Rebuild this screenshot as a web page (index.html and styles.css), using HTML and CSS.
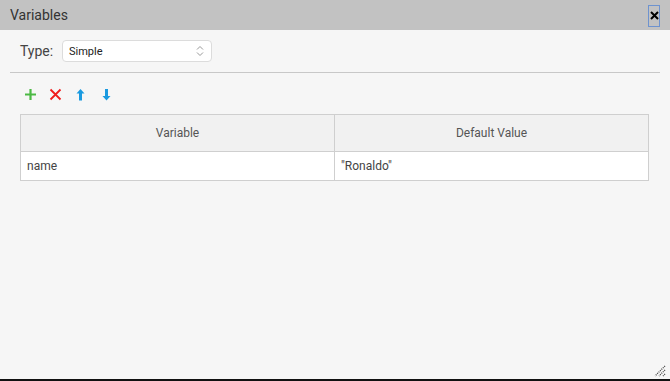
FILE: index.html
```html
<!DOCTYPE html>
<html lang="en">
<head>
  <meta charset="UTF-8">
  <title>Variables</title>
  <link rel="stylesheet" href="styles.css">
</head>
<body>
  <div class="dialog">
    <div class="titlebar">
      <span class="title">Variables</span>
      <button class="close-btn">
        <svg width="9" height="9" viewBox="0 0 9 9">
          <path d="M1 1 L8 8 M8 1 L1 8" stroke="#000" stroke-width="2"/>
        </svg>
      </button>
    </div>

    <div class="content">
      <div class="type-row">
        <label class="type-label">Type:</label>
        <div class="select">
          <span>Simple</span>
          <svg class="chevrons" width="8" height="12" viewBox="0 0 8 12">
            <path d="M1 4.5 L4 1.5 L7 4.5" fill="none" stroke="#999" stroke-width="1"/>
            <path d="M1 7.5 L4 10.5 L7 7.5" fill="none" stroke="#999" stroke-width="1"/>
          </svg>
        </div>
      </div>

      <div class="separator"></div>

      <div class="toolbar">
        <svg class="tool" width="13" height="13" viewBox="0 0 13 13">
          <path d="M6.5 1 V12 M1 6.5 H12" stroke="#4cb944" stroke-width="2.2"/>
        </svg>
        <svg class="tool" width="13" height="13" viewBox="0 0 13 13">
          <path d="M1.5 1.5 L11.5 11.5 M11.5 1.5 L1.5 11.5" stroke="#f01c1c" stroke-width="1.8"/>
        </svg>
        <svg class="tool" width="11" height="13" viewBox="0 0 11 13">
          <path d="M5.5 1 L9.5 5.5 H7 V12.5 H4 V5.5 H1.5 Z" fill="#1a9ae0"/>
        </svg>
        <svg class="tool" width="11" height="13" viewBox="0 0 11 13">
          <path d="M5.5 12.5 L9.5 8 H7 V1 H4 V8 H1.5 Z" fill="#1a9ae0"/>
        </svg>
      </div>

      <table class="var-table">
        <thead>
          <tr>
            <th>Variable</th>
            <th>Default Value</th>
          </tr>
        </thead>
        <tbody>
          <tr>
            <td>name</td>
            <td>"Ronaldo"</td>
          </tr>
        </tbody>
      </table>
    </div>

    <svg class="grip" width="13" height="13" viewBox="0 0 13 13">
      <path d="M12 2 L2 12 M12 6 L6 12 M12 10 L10 12" stroke="#444" stroke-width="1.3" stroke-dasharray="1 1"/>
    </svg>
  </div>
</body>
</html>
```

FILE: styles.css
```css
* {
  margin: 0;
  padding: 0;
  box-sizing: border-box;
}

body {
  font-family: Roboto, 'Noto Sans', sans-serif;
  background: #f6f6f6;
  width: 670px;
  height: 381px;
  overflow: hidden;
}

.dialog {
  position: relative;
  width: 670px;
  height: 381px;
  background: #f6f6f6;
  border-bottom: 2px solid #111;
  display: flex;
  flex-direction: column;
}

.titlebar {
  height: 30px;
  background: #c2c2c2;
  display: flex;
  align-items: center;
  justify-content: space-between;
  padding: 0 10px 0 10px;
}

.title {
  font-size: 14px;
  color: #333;
}

.close-btn {
  width: 12px;
  height: 22px;
  border: 1.5px solid #6e93cf;
  background: transparent;
  display: flex;
  align-items: center;
  justify-content: center;
  margin-top: 1px;
}

.close-btn svg {
  display: block;
  flex-shrink: 0;
}

.content {
  padding: 10px 10px 0 10px;
}

.type-row {
  display: flex;
  align-items: center;
  padding-left: 10px;
  height: 22px;
}

.type-label {
  font-size: 14px;
  color: #444;
  width: 42px;
}

.select {
  width: 150px;
  height: 22px;
  background: #fff;
  border: 1px solid #dcdcdc;
  border-radius: 4px;
  display: flex;
  align-items: center;
  justify-content: space-between;
  padding: 0 7px 0 6px;
  font-size: 11px;
  color: #222;
}

.separator {
  height: 1px;
  background: #c8c8c8;
  margin-top: 10px;
}

.toolbar {
  display: flex;
  align-items: center;
  gap: 12px;
  padding: 14px 0 0 14px;
  height: 29px;
}

.tool {
  display: block;
}

.tool:nth-child(3) {
  margin-left: 1px;
}

.tool:nth-child(4) {
  margin-left: 3px;
}

.var-table {
  margin: 12px 0 0 10px;
  width: 629px;
  border-collapse: collapse;
  font-size: 12px;
}

.var-table th,
.var-table td {
  border: 1px solid #cfcfcf;
  width: 50%;
}

.var-table th {
  height: 37px;
  background: #f1f1f1;
  font-weight: normal;
  color: #555;
}

.var-table td {
  height: 29px;
  background: #fff;
  color: #444;
  padding-left: 6px;
}

.grip {
  position: absolute;
  right: 4px;
  bottom: 2px;
}
```
